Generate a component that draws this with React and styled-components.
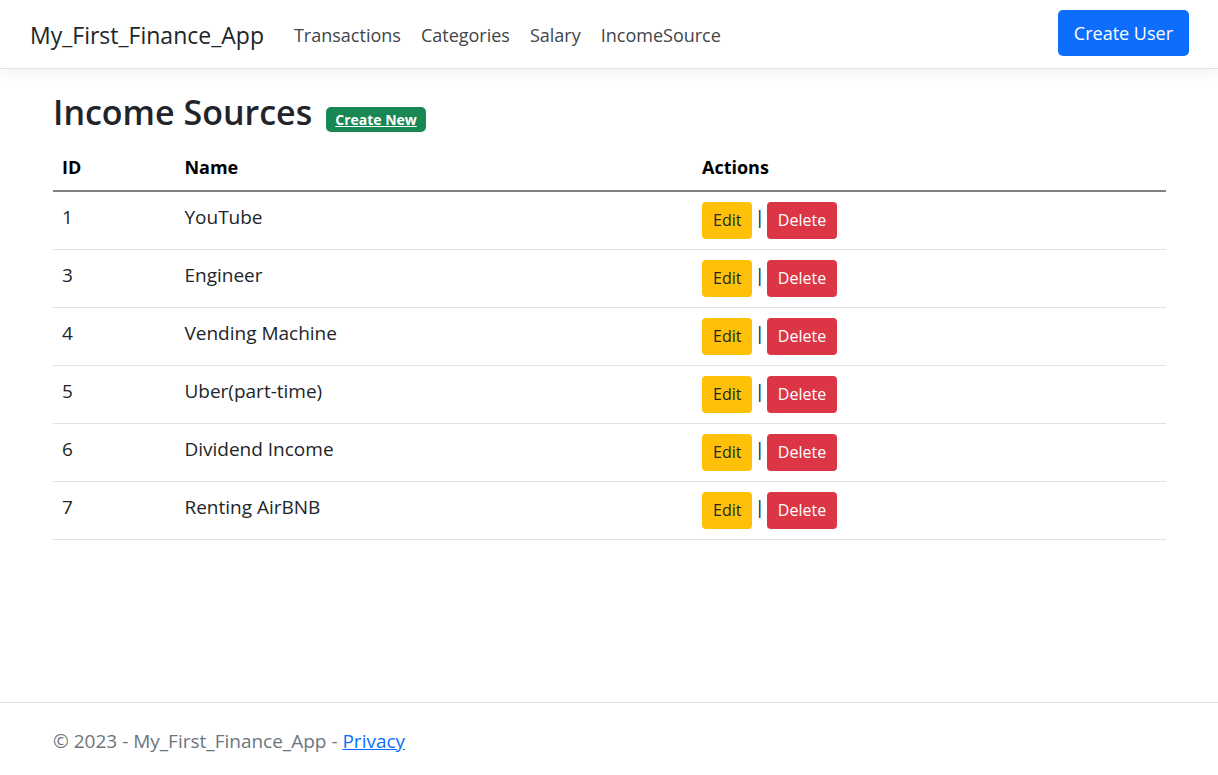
import React from "react";
import styled, { createGlobalStyle } from "styled-components";

const GlobalStyle = createGlobalStyle`
  *, *::before, *::after { box-sizing: border-box; }
  body {
    margin: 0;
    background: #fff;
    color: #212529;
    font-family: "Open Sans", "Noto Sans", sans-serif;
    font-size: 18px;
    line-height: 30px;
  }
`;

const Page = styled.div`
  display: flex;
  flex-direction: column;
  min-height: 100vh;
`;

const Header = styled.header`
  display: flex;
  align-items: flex-start;
  padding: 10px 29px 8px 30px;
  border-bottom: 1px solid #dee2e6;
  box-shadow: 0 5px 15px rgba(0, 0, 0, 0.05);
`;

const Brand = styled.a`
  margin-right: 30px;
  color: #212529;
  font-size: 23px;
  line-height: 50px;
  text-decoration: none;
`;

const Nav = styled.nav`
  display: flex;
  flex: 1;
  gap: 20px;
`;

const NavLink = styled.a`
  color: #40454a;
  line-height: 50px;
  text-decoration: none;
`;

const variants = {
  primary: { background: "#0d6efd", color: "#fff" },
  warning: { background: "#ffc107", color: "#212529" },
  danger: { background: "#dc3545", color: "#fff" },
};

const Button = styled.button`
  padding: ${({ $small }) => ($small ? "6px 11px" : "8px 16px")};
  border: 0;
  border-radius: ${({ $small }) => ($small ? "4px" : "5px")};
  background: ${({ $variant }) => variants[$variant].background};
  color: ${({ $variant }) => variants[$variant].color};
  font-family: inherit;
  font-size: ${({ $small }) => ($small ? "16px" : "18px")};
  line-height: ${({ $small }) => ($small ? "25px" : "30px")};
  cursor: pointer;
`;

const Main = styled.main`
  flex: 1;
  padding: 18px 52px 20px 53px;
`;

const TitleRow = styled.div`
  display: flex;
  align-items: baseline;
  gap: 14px;
`;

const Title = styled.h1`
  margin: 0;
  font-size: 34px;
  font-weight: 600;
  line-height: 50px;
`;

const Badge = styled.a`
  padding: 0 9px;
  border-radius: 5px;
  background: #198754;
  color: #fff;
  font-size: 14px;
  font-weight: 700;
  line-height: 25px;
`;

const Table = styled.table`
  width: 100%;
  margin-top: 6px;
  border-collapse: collapse;
  table-layout: fixed;
`;

const HeadCell = styled.th`
  width: ${({ $width }) => $width};
  padding: 10px 9px 9px;
  border-bottom: 2px solid #7f8082;
  color: #000;
  font-weight: 700;
  line-height: 28px;
  text-align: left;
`;

const Cell = styled.td`
  padding: 10px 9px;
  border-bottom: 1px solid #dee2e6;
  font-size: 19px;
  vertical-align: top;
`;

const Actions = styled.div`
  display: flex;
  gap: 2px;
`;

const Footer = styled.footer`
  padding: 23px 53px 19px;
  border-top: 1px solid #dee2e6;
  color: #6c757d;
  font-size: 19px;
`;

const FooterLink = styled.a`
  color: #0d6efd;
`;

const navItems = ["Transactions", "Categories", "Salary", "IncomeSource"];

const sources = [
  { id: 1, name: "YouTube" },
  { id: 3, name: "Engineer" },
  { id: 4, name: "Vending Machine" },
  { id: 5, name: "Uber(part-time)" },
  { id: 6, name: "Dividend Income" },
  { id: 7, name: "Renting AirBNB" },
];

export default function App() {
  return (
    <Page>
      <GlobalStyle />
      <Header>
        <Brand href="#">My_First_Finance_App</Brand>
        <Nav>
          {navItems.map((item) => (
            <NavLink key={item} href="#">{item}</NavLink>
          ))}
        </Nav>
        <Button type="button" $variant="primary">Create User</Button>
      </Header>
      <Main>
        <TitleRow>
          <Title>Income Sources</Title>
          <Badge href="#">Create New</Badge>
        </TitleRow>
        <Table>
          <thead>
            <tr>
              <HeadCell scope="col" $width="11%">ID</HeadCell>
              <HeadCell scope="col">Name</HeadCell>
              <HeadCell scope="col" $width="42.5%">Actions</HeadCell>
            </tr>
          </thead>
          <tbody>
            {sources.map(({ id, name }) => (
              <tr key={id}>
                <Cell>{id}</Cell>
                <Cell>{name}</Cell>
                <Cell>
                  <Actions>
                    <Button type="button" $small $variant="warning">Edit</Button>
                    <span>|</span>
                    <Button type="button" $small $variant="danger">Delete</Button>
                  </Actions>
                </Cell>
              </tr>
            ))}
          </tbody>
        </Table>
      </Main>
      <Footer>
        © 2023 - My_First_Finance_App - <FooterLink href="#">Privacy</FooterLink>
      </Footer>
    </Page>
  );
}
